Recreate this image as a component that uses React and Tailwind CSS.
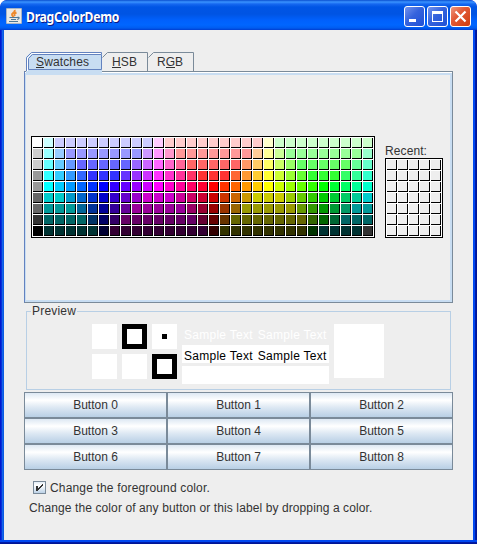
import React from "react";

const rows = [
  "ffffff ccffff ccccff*9 ffccff ffcccc*9 ffffcc ccffcc*9",
  "cccccc 99ffff 99ccff 9999ff*7 cc99ff ff99ff ff99cc ff9999*7 ffcc99 ffff99 ccff99 99ff99*7 99ffcc",
  "cccccc 66ffff 66ccff 6699ff 6666ff*5 9966ff cc66ff ff66ff ff66cc ff6699 ff6666*5 ff9966 ffcc66 ffff66 ccff66 99ff66 66ff66*5 66ff99 66ffcc",
  "999999 33ffff 33ccff 3399ff 3366ff 3333ff*3 6633ff 9933ff cc33ff ff33ff ff33cc ff3399 ff3366 ff3333*3 ff6633 ff9933 ffcc33 ffff33 ccff33 99ff33 66ff33 33ff33*3 33ff66 33ff99 33ffcc",
  "999999 00ffff 00ccff 0099ff 0066ff 0033ff 0000ff 3300ff 6600ff 9900ff cc00ff ff00ff ff00cc ff0099 ff0066 ff0033 ff0000 ff3300 ff6600 ff9900 ffcc00 ffff00 ccff00 99ff00 66ff00 33ff00 00ff00 00ff33 00ff66 00ff99 00ffcc",
  "666666 00cccc*2 0099cc 0066cc 0033cc 0000cc 3300cc 6600cc 9900cc cc00cc*3 cc0099 cc0066 cc0033 cc0000 cc3300 cc6600 cc9900 cccc00*3 99cc00 66cc00 33cc00 00cc00 00cc33 00cc66 00cc99 00cccc",
  "666666 009999*3 006699 003399 000099 330099 660099 990099*5 990066 990033 990000 993300 996600 999900*5 669900 339900 009900 009933 009966 009999*2",
  "333333 006666*4 003366 000066 330066 660066*7 660033 660000 663300 666600*7 336600 006600 006633 006666*3",
  "000000 003333*5 000033 330033*9 330000 333300*8 003300 003333*4 333333",
];

const swatches = rows.flatMap((row) =>
  row.split(" ").flatMap((entry) => {
    const [hex, count] = entry.split("*");
    return Array(Number(count || 1)).fill("#" + hex);
  })
);

function Swatch({ color }) {
  return (
    <div
      className="size-[10px] border-r border-b border-black"
      style={{ backgroundColor: color }}
    />
  );
}

function JavaIcon() {
  return (
    <svg width="16" height="16" viewBox="0 0 16 16" fill="none">
      <rect width="16" height="16" rx="1" fill="#a9b4c4" />
      <rect x="1" y="1" width="14" height="14" fill="#eae9e6" />
      <path d="M8.500 2C10 4.500 5 5 6 7c.3.8 1 1 1.300 2M10.500 4.500C8 5.500 8 6.500 9 8" stroke="#ee8a2c" strokeWidth="1.900" />
      <path d="M3.500 9.500H11M5 11.500h5M3 13.500h9M11 9.500c3-.8 2.500 1.500.2 2" stroke="#4e7896" strokeWidth="1.200" />
    </svg>
  );
}

function TitleBar() {
  return (
    <div className="flex h-[30px] shrink-0 items-start rounded-t-[7px] bg-[linear-gradient(180deg,#0a4fd0_0px,#3a93ff_2px,#1668f0_4px,#0055e5_7px,#0054e3_14px,#0060fc_20px,#0066ff_25px,#005cf0_28px,#003dd0_30px)] pt-[6px] pr-[6px] pl-[6px]">
      <div className="mt-[2px]">
        <JavaIcon />
      </div>
      <span className="mt-px ml-[4px] origin-left scale-x-[0.905] font-['Noto_Sans'] text-[13.500px] leading-[20px] font-bold tracking-[-0.350px] whitespace-nowrap text-white [text-shadow:1px_1px_0_#0a1883]">
        DragColorDemo
      </span>
      <div className="ml-auto flex gap-[2px]">
        <svg width="21" height="21" viewBox="0 0 21 21">
          <rect x=".5" y=".5" width="20" height="20" rx="2.500" fill="url(#blue)" stroke="#fff" />
          <path d="M5 13h7v3H5z" fill="#fff" />
          <defs>
            <linearGradient id="blue" x1="0" y1="0" x2="1" y2="1">
              <stop stopColor="#7796ee" />
              <stop offset=".45" stopColor="#3563dd" />
              <stop offset="1" stopColor="#1e4fd5" />
            </linearGradient>
            <linearGradient id="red" x1="0" y1="0" x2="1" y2="1">
              <stop stopColor="#ef9a82" />
              <stop offset=".4" stopColor="#e25a37" />
              <stop offset="1" stopColor="#cf3b0c" />
            </linearGradient>
          </defs>
        </svg>
        <svg width="21" height="21" viewBox="0 0 21 21">
          <rect x=".5" y=".5" width="20" height="20" rx="2.500" fill="url(#blue)" stroke="#fff" />
          <path d="M5 5h11v11H5zM6 8v7h9V8z" fill="#fff" fillRule="evenodd" />
        </svg>
        <svg width="21" height="21" viewBox="0 0 21 21">
          <rect x=".5" y=".5" width="20" height="20" rx="2.500" fill="url(#red)" stroke="#fff" />
          <path d="M5.500 5.500l10 10M15.500 5.500l-10 10" stroke="#fff" strokeWidth="2.200" />
        </svg>
      </div>
    </div>
  );
}

function Tabs() {
  return (
    <svg className="relative block" width="429" height="22" viewBox="0 0 429 22" fill="none">
      <path d="M2 22V5l4-4h72v21z" fill="#c8ddf2" />
      <path d="M2.500 19V5.500l5-5H77.500V2" stroke="#6382bf" />
      <path d="M3.500 19V6l4-4.500H77" stroke="#fff" />
      <path d="M4.500 17.500V6.500l4-4H77.500v15z" stroke="#6382bf" />
      <path d="M78.500 5.500l5-5h40V19M124.500 5.500l5-5h40V19" stroke="#7a8a99" />
      <g fill="#333" fontFamily="Liberation Sans, sans-serif" fontSize="12">
        <text x="12" y="14" textLength="53">Swatches</text>
        <text x="88" y="14" textLength="25">HSB</text>
        <text x="133" y="14" textLength="26">RGB</text>
      </g>
      <path d="M12 15.500h8M88 15.500h9M142 15.500h9" stroke="#333" />
    </svg>
  );
}

function Preview() {
  return (
    <fieldset className="mx-[2px] h-[87px] border border-[#b8cfe5]">
      <legend className="ml-[4px] h-[16px] px-px text-[12px] leading-[17px] tracking-[0.2px]">Preview</legend>
      <div className="mt-[5px] ml-[65px] flex gap-[5px]">
        <div className="grid grid-cols-[25px_25px_25px] grid-rows-[25px_25px] gap-[5px]">
          <div className="bg-white" />
          <div className="border-5 border-black bg-white" />
          <div className="flex items-center justify-center bg-white">
            <div className="size-[5px] bg-black" />
          </div>
          <div className="bg-white" />
          <div className="bg-white" />
          <div className="border-5 border-black bg-white" />
        </div>
        <div className="flex w-[147px] flex-col gap-[3px] text-[12px] leading-[18px] tracking-[0.270px] whitespace-nowrap">
          <div className="flex h-[18px] gap-[5px] pt-[2px] pl-[2px] text-white">
            <span>Sample Text</span>
            <span>Sample Text</span>
          </div>
          <div className="flex h-[18px] gap-[5px] bg-white pt-[2px] pl-[2px] text-black">
            <span>Sample Text</span>
            <span>Sample Text</span>
          </div>
          <div className="h-[18px] bg-white" />
        </div>
        <div className="h-[54px] w-[50px] bg-white" />
      </div>
    </fieldset>
  );
}

export default function App() {
  return (
    <div className="h-[544px] w-[477px] bg-white font-['Liberation_Sans',sans-serif] text-[#333]">
      <div className="flex h-full flex-col overflow-hidden rounded-t-[7px] bg-[#0831d9]">
        <TitleBar />
        <div className="flex flex-1 bg-[linear-gradient(90deg,#0019cf_1px,#0831d9_1px,#0831d9_2px,#166aee_2px,#0855dd_4px,#0048f0_4px,#0048f0_475px,#001db0_475px,#00138c_477px)] pr-[4px] pl-[4px]">
          <div className="flex-1 bg-[#eee] pt-[22px] pr-[20px] pl-[20px]">
            <Tabs />
            <div className="-mt-[3px] h-[232px] border border-[#7a8a99] border-l-[#6382bf] bg-white pt-px">
              <div className="flex h-full items-start border-2 border-l border-[#c8ddf2] bg-[#eee] pt-[61px] pl-[5px]">
                <div className="grid grid-cols-[repeat(31,10px)] gap-px border border-black bg-white p-px">
                  {swatches.map((c, i) => (
                    <Swatch key={i} color={c} />
                  ))}
                </div>
                <div className="mt-[7px] ml-[10px]">
                  <div className="h-[15px] text-[12px] leading-[16px] tracking-[0.1px]">Recent:</div>
                  <div className="grid grid-cols-[repeat(5,10px)] gap-px border border-black bg-white p-px">
                    {Array.from({ length: 35 }, (_, i) => (
                      <Swatch key={i} color="#eeeeee" />
                    ))}
                  </div>
                </div>
              </div>
            </div>
            <Preview />
            <div className="mt-[2px] grid h-[78px] grid-cols-3 grid-rows-3">
              {Array.from({ length: 9 }, (_, i) => (
                <button
                  key={i}
                  className="border border-[#7a8a99] bg-[linear-gradient(180deg,#dde8f3_0%,#ffffff_30%,#dde8f3_60%,#b8cfe5_100%)] text-[12px] leading-[24px]"
                >
                  Button {i}
                </button>
              ))}
            </div>
            <div className="mt-[10px] ml-[9px] flex h-[16px] items-start">
              <svg className="mt-px" width="13" height="13" viewBox="0 0 13 13">
                <defs>
                  <linearGradient id="box" x1="0" y1="0" x2="0" y2="1">
                    <stop stopColor="#dde8f3" />
                    <stop offset=".3" stopColor="#fff" />
                    <stop offset="1" stopColor="#b8cfe5" />
                  </linearGradient>
                </defs>
                <rect x=".5" y=".5" width="12" height="12" fill="url(#box)" stroke="#7a8a99" />
                <path d="M3 5h2v2h1V6h1V5h1V4h1V3h1v2H9v1H8v1H7v1H6v1H5v1H3z" fill="#333" />
              </svg>
              <span className="ml-[4px] text-[12px] leading-[16px] tracking-[0.160px]">
                Change the foreground color.
              </span>
            </div>
            <div className="mt-[4px] ml-[5px] text-[12px] leading-[16px] tracking-[0.1px] whitespace-nowrap">
              Change the color of any button or this label by dropping a color.
            </div>
          </div>
        </div>
        <div className="h-[4px] shrink-0 bg-[linear-gradient(180deg,#0048f0_0px,#0048f0_2px,#001db0_2px,#00138c_4px)]" />
      </div>
    </div>
  );
}
